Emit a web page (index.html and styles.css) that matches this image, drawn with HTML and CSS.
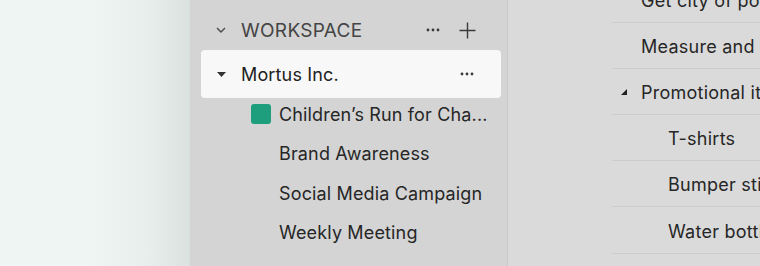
FILE: index.html
```html
<!DOCTYPE html>
<html lang="en">
<head>
    <meta charset="UTF-8">
    <meta name="viewport" content="width=device-width, initial-scale=1.0">
    <title>Workspace</title>
    <link rel="stylesheet" href="styles.css">
</head>
<body>
  <div class="app">
    <div class="backdrop"></div>

    <div class="sidebar">
      <div class="section-head">
        <span class="chev">
          <svg width="10" height="6" viewBox="0 0 10 6"><path d="M1 1l4 4 4-4" fill="none" stroke="#4a4a4a" stroke-width="1.4"/></svg>
        </span>
        <span class="section-title">WORKSPACE</span>
        <span class="act dots">
          <svg width="14" height="4" viewBox="0 0 14 4"><circle cx="2" cy="2" r="1.4" fill="#3a3a3a"/><circle cx="7" cy="2" r="1.4" fill="#3a3a3a"/><circle cx="12" cy="2" r="1.4" fill="#3a3a3a"/></svg>
        </span>
        <span class="act plus">
          <svg width="17" height="17" viewBox="0 0 17 17"><path d="M8.5 0.5v16M0.5 8.5h16" stroke="#3a3a3a" stroke-width="1.4"/></svg>
        </span>
      </div>

      <div class="org-row">
        <span class="caret">
          <svg width="9" height="5" viewBox="0 0 9 5"><path d="M0 0h9L4.5 5z" fill="#333"/></svg>
        </span>
        <span class="org-name">Mortus Inc.</span>
        <span class="act dots">
          <svg width="14" height="4" viewBox="0 0 14 4"><circle cx="2" cy="2" r="1.4" fill="#3a3a3a"/><circle cx="7" cy="2" r="1.4" fill="#3a3a3a"/><circle cx="12" cy="2" r="1.4" fill="#3a3a3a"/></svg>
        </span>
      </div>

      <ul class="projects">
        <li><span class="swatch"></span><span class="proj-name">Children’s Run for Cha...</span></li>
        <li><span class="proj-name">Brand Awareness</span></li>
        <li><span class="proj-name">Social Media Campaign</span></li>
        <li><span class="proj-name">Weekly Meeting</span></li>
      </ul>
    </div>

    <div class="main">
      <ul class="tasks">
        <li>Get city of post office</li>
        <li>Measure and order</li>
        <li class="parent">
          <span class="tri"><svg width="6" height="6" viewBox="0 0 6 6"><path d="M6 0v6H0z" fill="#222"/></svg></span>
          Promotional items
        </li>
        <li class="sub">T-shirts</li>
        <li class="sub">Bumper stickers</li>
        <li class="sub">Water bottles</li>
      </ul>
    </div>
  </div>
</body>
</html>
```

FILE: styles.css
```css
* {
    padding: 0;
    margin: 0;
    box-sizing: border-box;
    font-family: "Inter", "Noto Sans", sans-serif;
}
body {
    background-color: #eff5f3;
}
.app {
    display: flex;
    width: 760px;
    height: 266px;
    overflow: hidden;
}
.backdrop {
    width: 190px;
    flex-shrink: 0;
    background: linear-gradient(to right, #eff5f3 0, #eff5f3 90px, #e9efed 145px, #dbe1df 190px);
}
.sidebar {
    width: 318px;
    flex-shrink: 0;
    background-color: #d4d4d4;
    border-right: 1px solid #c9c9c9;
    padding: 10px 6px 0 11px;
}
.section-head {
    display: flex;
    align-items: center;
    height: 40px;
}
.chev {
    width: 40px;
    padding-left: 15px;
    display: flex;
}
.section-title {
    flex: 1;
    font-size: 19px;
    color: #454545;
    letter-spacing: 0.3px;
}
.act {
    display: flex;
    align-items: center;
    justify-content: center;
}
.section-head .dots {
    width: 34px;
}
.section-head .plus {
    width: 34px;
    margin-right: 17px;
}
.org-row {
    display: flex;
    align-items: center;
    height: 48px;
    background-color: #f8f8f8;
    border-radius: 4px;
}
.caret {
    width: 40px;
    padding-left: 16px;
    display: flex;
}
.org-name {
    flex: 1;
    font-size: 18px;
    letter-spacing: 0.15px;
    color: #222;
}
.org-row .dots {
    width: 34px;
    margin-right: 17px;
}
.projects {
    list-style: none;
    padding-left: 50px;
    padding-top: 1px;
}
.projects li {
    display: flex;
    align-items: center;
    height: 30px;
    margin-bottom: 9.5px;
    padding-left: 28px;
    position: relative;
}
.swatch {
    position: absolute;
    left: 0;
    top: 5px;
    width: 20px;
    height: 20px;
    border-radius: 3px;
    background-color: #1f9e7d;
}
.proj-name {
    font-size: 18px;
    letter-spacing: 0.15px;
    color: #262626;
    white-space: nowrap;
}
.main {
    flex: 1;
    background-color: #dadada;
}
.tasks {
    list-style: none;
    margin-left: 104px;
    margin-top: -23.5px;
}
.tasks li {
    height: 46.2px;
    display: flex;
    align-items: center;
    padding-left: 29px;
    padding-top: 2px;
    border-bottom: 1px solid #cdcdcd;
    font-size: 18px;
    letter-spacing: 0.25px;
    color: #262626;
    white-space: nowrap;
    position: relative;
}
.tasks li.sub {
    padding-left: 56px;
}
.tri {
    position: absolute;
    left: 9px;
    top: 20px;
    display: flex;
}
```
